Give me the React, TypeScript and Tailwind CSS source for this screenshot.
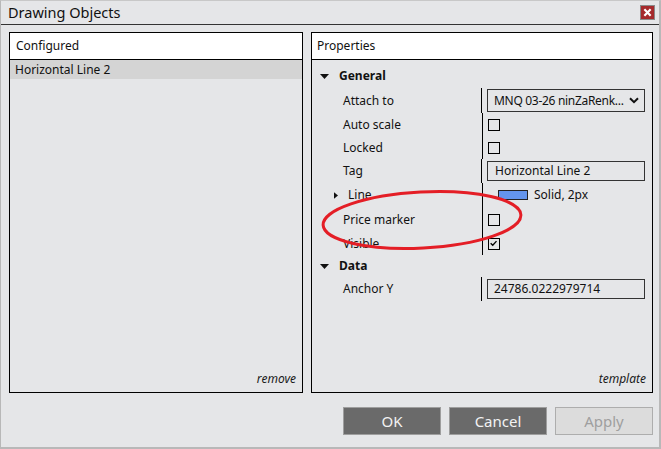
import React from "react";

const F = { fontFamily: '"Noto Sans", "Open Sans", sans-serif' };

function Check({ checked = false }: { checked?: boolean }) {
  return (
    <div className="w-[12px] h-[12px] border border-black relative">
      {checked && (
        <svg viewBox="0 0 12 12" className="absolute inset-0 w-[10px] h-[10px]">
          <path d="M2 5 L4.5 7.5 L9 2.5" stroke="#000" strokeWidth="1.6" fill="none" />
        </svg>
      )}
    </div>
  );
}

function Row({
  label,
  h,
  children,
  sep = true,
  labelPad = "pl-[31px]",
  arrow = false,
}: {
  label: string;
  h: string;
  children?: React.ReactNode;
  sep?: boolean;
  labelPad?: string;
  arrow?: boolean;
}) {
  return (
    <div className={`flex ${h}`}>
      <div className={`w-[170px] flex items-center ${labelPad} text-[12px] text-[#111] whitespace-nowrap`}>
        {arrow && (
          <svg viewBox="0 0 5 8" className="w-[4px] h-[7px] mr-[10px]">
            <path d="M0 0 L5 4 L0 8 Z" fill="#111" />
          </svg>
        )}
        {label}
      </div>
      <div className={`w-px ${sep ? "bg-black" : ""}`} />
      <div className="flex-1 flex items-center pl-[5px] pr-[7px]">{children}</div>
    </div>
  );
}

function Section({ title, h = "h-[24px]" }: { title: string; h?: string }) {
  return (
    <div className={`flex items-center ${h} pl-[8px] text-[12px] font-bold text-[#111]`}>
      <svg viewBox="0 0 9 5" className="w-[9px] h-[5px] mr-[10px]">
        <path d="M0 0 L9 0 L4.5 5 Z" fill="#111" />
      </svg>
      {title}
    </div>
  );
}

export default function App() {
  return (
    <div
      className="w-[661px] h-[449px] bg-[#e5e6e8] relative flex flex-col border-l border-r-2 border-b-2 border-[#b8b8b8] border-t border-t-[#c8c8c8] overflow-hidden"
      style={F}
    >
      {/* Title bar */}
      <div className="h-[24px] flex items-center justify-between border-b border-[#333] pl-[7px] pr-[4px] shrink-0">
        <span className="text-[14.5px] text-[#111] leading-none">Drawing Objects</span>
        <div className="w-[15px] h-[15px] bg-[#a52a2c] border border-[#8a8a8a] flex items-center justify-center">
          <svg viewBox="0 0 10 10" className="w-[9px] h-[9px]">
            <path d="M1.5 1.5 L8.5 8.5 M8.5 1.5 L1.5 8.5" stroke="#fff" strokeWidth="2.4" />
          </svg>
        </div>
      </div>

      {/* Panels */}
      <div className="flex gap-[8px] pl-[8px] pt-[7px] h-[368px] shrink-0">
        {/* Left */}
        <div className="w-[294px] h-[361px] border border-black flex flex-col">
          <div className="h-[27px] bg-white border-b border-black flex items-center pl-[6px] text-[12px] text-[#111]">
            Configured
          </div>
          <div className="h-[19px] bg-[#d4d4d4] flex items-center pl-[5px] text-[12px] text-[#111]">
            Horizontal Line 2
          </div>
          <div className="flex-1" />
          <div className="h-[22px] flex items-start justify-end pr-[6px] text-[12px] italic text-[#1a1a1a]">
            remove
          </div>
        </div>

        {/* Right */}
        <div className="w-[342px] h-[361px] border border-black flex flex-col">
          <div className="h-[27px] bg-white border-b border-black flex items-center pl-[5px] text-[12px] text-[#111]">
            Properties
          </div>
          <div className="h-[4px]" />
          <Section title="General" />
          <Row label="Attach to" h="h-[25px]">
            <div className="w-[158px] h-[23px] border border-[#333] flex items-center justify-between pl-[6px] pr-[5px] text-[12px] text-[#111] whitespace-nowrap overflow-hidden">
              <span className="tracking-[-0.3px]">MNQ 03-26 ninZaRenk...</span>
              <svg viewBox="0 0 10 7" className="w-[10px] h-[7px] shrink-0">
                <path d="M1 1.2 L5 5.2 L9 1.2" stroke="#111" strokeWidth="2" fill="none" />
              </svg>
            </div>
          </Row>
          <Row label="Auto scale" h="h-[23px]">
            <Check />
          </Row>
          <Row label="Locked" h="h-[23px]">
            <Check />
          </Row>
          <Row label="Tag" h="h-[24px]">
            <div className="w-[158px] h-[20px] border border-[#333] flex items-center pl-[7px] text-[12px] text-[#111]">
              Horizontal Line 2
            </div>
          </Row>
          <Row label="Line" h="h-[24px]" labelPad="pl-[22px]" arrow>
            <div className="flex items-center pl-[10px]">
              <div className="w-[30px] h-[10px] bg-[#6495ed] border border-[#222]" />
              <span className="ml-[6px] text-[12px] text-[#111]">Solid, 2px</span>
            </div>
          </Row>
          <Row label="Price marker" h="h-[25px]">
            <Check />
          </Row>
          <Row label="Visible" h="h-[23px]">
            <Check checked />
          </Row>
          <Section title="Data" h="h-[22px]" />
          <Row label="Anchor Y" h="h-[24px]">
            <div className="w-[158px] h-[20px] border border-[#333] flex items-center pl-[6px] text-[12px] text-[#111]">
              24786.0222979714
            </div>
          </Row>
          <div className="flex-1" />
          <div className="h-[22px] flex items-start justify-end pr-[6px] text-[12px] italic text-[#1a1a1a]">
            template
          </div>
        </div>
      </div>

      {/* Buttons */}
      <div className="flex justify-end gap-[8px] pr-[6px] pt-[14px]">
        <button className="w-[98px] h-[28px] bg-[#6a6a6a] border border-[#9e9e9e] text-[#f2f2f2] text-[15px]">
          OK
        </button>
        <button className="w-[98px] h-[28px] bg-[#6a6a6a] border border-[#9e9e9e] text-[#f2f2f2] text-[15px]">
          Cancel
        </button>
        <button className="w-[98px] h-[28px] bg-[#dcdcdc] border border-[#adadad] text-[#9f9f9f] text-[15px]">
          Apply
        </button>
      </div>

      {/* Red annotation ellipse */}
      <svg className="absolute left-0 top-0 w-[661px] h-[449px] pointer-events-none" viewBox="0 0 661 449">
        <ellipse
          cx="421"
          cy="219"
          rx="99"
          ry="28"
          transform="rotate(-3 421 219)"
          fill="none"
          stroke="#e41e26"
          strokeWidth="3"
        />
      </svg>
    </div>
  );
}
